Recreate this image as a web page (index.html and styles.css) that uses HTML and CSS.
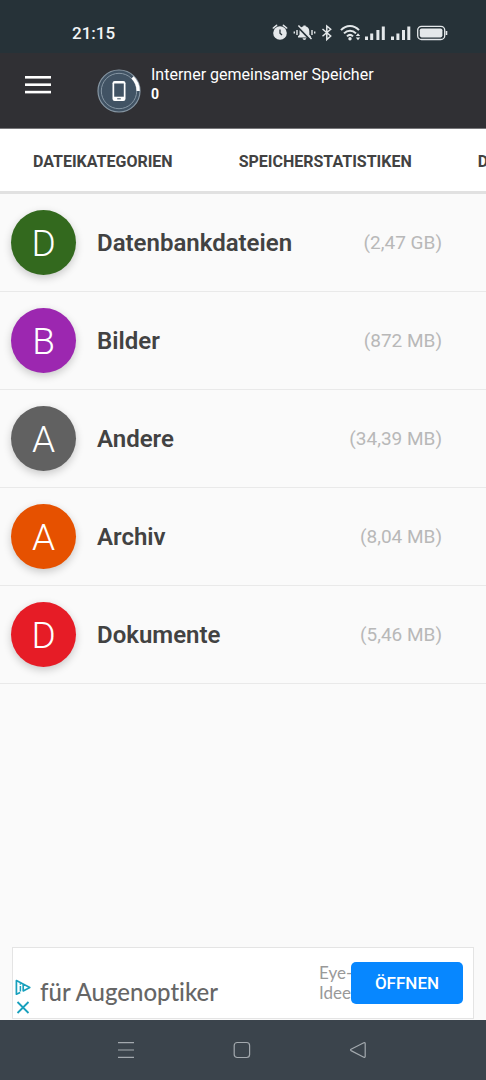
FILE: index.html
```html
<!DOCTYPE html>
<html lang="de">
<head>
    <meta charset="UTF-8">
    <meta name="viewport" content="width=device-width, initial-scale=1.0">
    <title>Dateikategorien</title>
    <link rel="stylesheet" href="styles.css">
</head>
<body>
    <div class="statusbar">
        <span class="clock">21:15</span>
        <svg class="status-icons" width="176" height="18" viewBox="0 0 176 18" fill="#e4e8ea" stroke="#e4e8ea">
            <!-- Wecker -->
            <circle cx="8" cy="9" r="6.8" stroke="none"/>
            <path d="M1.3 4 L4.6 1.3 M14.7 4 L11.4 1.3" fill="none" stroke-width="1.5" stroke-linecap="round"/>
            <path d="M8 5.5 V9.2 L10 11" fill="none" stroke="#263238" stroke-width="1.3"/>
            <!-- Stumm -->
            <path d="M26 13.5 V12.3 L27.5 10.8 V7.5 C27.5 4.8 29 2.9 31.4 2.3 V1.4 H33.6 V2.3 C36 2.9 37.3 4.8 37.3 7.5 V10.8 L38.8 12.3 V13.5 Z M30.6 14.3 H34.2 C34.2 16.4 30.6 16.4 30.6 14.3 Z" stroke="none"/>
            <path d="M26.2 2.8 L38.4 15.6" stroke="#263238" stroke-width="2.4"/>
            <path d="M26.4 1.5 L39.5 15" fill="none" stroke-width="1.5"/>
            <path d="M25 6 V11 M40 6 V11 M22.3 7.5 V9.5 M42.7 7.5 V9.5" fill="none" stroke-width="1.4"/>
            <!-- Bluetooth -->
            <path d="M50.5 5 L58.7 12 L54.8 15.6 V2 L58.7 5.3 L50.5 12.3" fill="none" stroke-width="1.5"/>
            <!-- WLAN -->
            <path d="M69 6.2 C74 .6 82 .6 87 6.2 M72 9.4 C75.5 5.7 80.5 5.7 84 9.4 M75 12.4 C77 10.4 79 10.4 81 12.4" fill="none" stroke-width="2"/>
            <circle cx="78" cy="14.7" r="1.7" stroke="none"/>
            <path d="M83.8 12 L86 9.3 L88.2 12 Z M83.8 13.5 L86 16.2 L88.2 13.5 Z" stroke="none"/>
            <!-- Empfang -->
            <path d="M94.5 16 V12.5 M99.7 16 V9.5 M105.9 16 V6 M111.3 16 V2.5" fill="none" stroke-width="3"/>
            <path d="M120.5 16 V12.5 M125.9 16 V9.5 M131.5 16 V6 M136.8 16 V2.5" fill="none" stroke-width="3"/>
            <!-- Akku -->
            <rect x="145.7" y="2.3" width="27" height="13.2" rx="3.8" fill="none" stroke-width="1.3"/>
            <rect x="147.8" y="4.4" width="22.6" height="9" rx="1.8" stroke="none"/>
            <path d="M174.5 7 V11" fill="none" stroke-width="1.6"/>
        </svg>
    </div>

    <header class="toolbar">
        <button type="button" class="menu-button" aria-label="Menü">
            <svg width="26" height="18" viewBox="0 0 26 18" fill="#fff">
                <rect y="0" width="26" height="2.6"/>
                <rect y="7.4" width="26" height="2.6"/>
                <rect y="14.8" width="26" height="2.6"/>
            </svg>
        </button>
        <svg class="storage-icon" width="44" height="44" viewBox="0 0 44 44" fill="none">
            <circle cx="22" cy="22" r="21" fill="#415364" stroke="#8696a3" stroke-width="1.2"/>
            <circle cx="22" cy="22" r="17.7" stroke="#8696a3" stroke-width="1"/>
            <path d="M35.5 8.4 A19.2 19.2 0 0 1 41.2 22" stroke="#fff" stroke-width="3.2"/>
            <rect x="15.5" y="12" width="13" height="20" rx="2.2" fill="#fff"/>
            <rect x="17.2" y="14.5" width="9.6" height="13.2" fill="#415364"/>
            <rect x="20.2" y="29.3" width="3.6" height="1" fill="#415364"/>
        </svg>
        <div class="storage">
            <span>Interner gemeinsamer Speicher</span>
            <b>0</b>
        </div>
    </header>

    <nav class="tabs">
        <a href="#kategorien">DATEIKATEGORIEN</a>
        <a href="#statistiken">SPEICHERSTATISTIKEN</a>
        <a href="#dateien">D</a>
    </nav>

    <main>
        <ul class="categories" id="kategorien">
            <li>
                <span class="letter green">D</span>
                <span class="name">Datenbankdateien</span>
                <span class="size">(2,47 GB)</span>
            </li>
            <li>
                <span class="letter purple">B</span>
                <span class="name">Bilder</span>
                <span class="size">(872 MB)</span>
            </li>
            <li>
                <span class="letter gray">A</span>
                <span class="name">Andere</span>
                <span class="size">(34,39 MB)</span>
            </li>
            <li>
                <span class="letter orange">A</span>
                <span class="name">Archiv</span>
                <span class="size">(8,04 MB)</span>
            </li>
            <li>
                <span class="letter red">D</span>
                <span class="name">Dokumente</span>
                <span class="size">(5,46 MB)</span>
            </li>
        </ul>
    </main>

    <aside class="ad">
        <svg class="ad-choices" width="16" height="36" viewBox="0 0 16 36" fill="none" stroke="#18a0bd">
            <path d="M5.2 13.4 L1.4 15.2 V1.6 L14.8 8.4 L8.2 11.9 V5.4" stroke-width="1.7" stroke-linejoin="round"/>
            <path d="M5.4 7 V12.4 M5.4 4.2 V5.8" stroke-width="1.5"/>
            <path d="M2.5 23 L13.5 34 M13.5 23 L2.5 34" stroke-width="1.8"/>
        </svg>
        <span class="ad-title">für Augenoptiker</span>
        <span class="ad-text">Eye-<br>Idee</span>
        <button type="button" class="ad-button">ÖFFNEN</button>
    </aside>

    <div class="navbar">
        <button type="button" aria-label="Letzte Apps">
            <svg width="18" height="18" viewBox="0 0 18 18" fill="none" stroke="#a3a9ae" stroke-width="1.2">
                <path d="M1 1.7 H17 M1 9 H17 M1 16.4 H17"/>
            </svg>
        </button>
        <button type="button" aria-label="Startbildschirm">
            <svg width="18" height="18" viewBox="0 0 18 18" fill="none" stroke="#a3a9ae" stroke-width="1.2">
                <rect x="1.2" y="1.5" width="15.4" height="15" rx="3"/>
            </svg>
        </button>
        <button type="button" aria-label="Zurück">
            <svg width="18" height="18" viewBox="0 0 18 18" fill="none" stroke="#a3a9ae" stroke-width="1.2" stroke-linejoin="round">
                <path d="M2 8.3 L14.8 1.8 Q16.2 1.4 16.2 2.8 V15.2 Q16.2 16.6 14.8 16.2 L2 9.6 Q1 9 2 8.3 Z"/>
            </svg>
        </button>
    </div>
</body>
</html>
```
FILE: styles.css
```css
* {
    box-sizing: border-box;
}

body {
    font-family: Roboto, "Liberation Sans", sans-serif;
    background-color: #fafafa;
    color: #424242;
    margin: 0;
    min-height: 100vh;
    display: flex;
    flex-direction: column;
    overflow-x: hidden;
}

button {
    background: none;
    border: none;
    padding: 0;
    font-family: inherit;
    cursor: pointer;
}

svg {
    display: block;
    flex: none;
}

.statusbar {
    display: flex;
    justify-content: space-between;
    align-items: center;
    height: 53px;
    padding: 12px 38px 0 72px;
    background-color: #263238;
}

.clock {
    color: #f2f5f6;
    font-size: 17px;
    font-weight: 500;
}

.toolbar {
    display: flex;
    height: 75px;
    padding: 0 24px;
    background-color: #303034;
    color: #fff;
}

.menu-button {
    height: 64px;
    padding: 0 1px;
}

.storage-icon {
    margin: 16px 10px 0 45px;
}

.storage {
    display: flex;
    flex-direction: column;
    padding-top: 12px;
    font-size: 16px;
    line-height: 20px;
}

.storage b {
    font-size: 14px;
    line-height: 18px;
}

.tabs {
    display: flex;
    height: 66px;
    background-color: #fff;
    border-top: 1px solid #77777a;
    border-bottom: 3px solid #e1e1e1;
    overflow: hidden;
}

.tabs a {
    flex: none;
    padding: 0 33px;
    line-height: 66px;
    color: #424242;
    font-size: 16px;
    font-weight: 700;
    text-decoration: none;
}

main {
    flex: 1;
}

.categories {
    list-style: none;
    margin: 0;
    padding: 0;
}

.categories li {
    display: flex;
    align-items: center;
    height: 98px;
    padding: 0 44px 0 11px;
    border-bottom: 1px solid #e9e9e9;
}

.letter {
    width: 65px;
    height: 65px;
    margin-right: 21px;
    border-radius: 50%;
    box-shadow: 0 3px 8px rgba(0, 0, 0, 0.2);
    color: #fff;
    font-size: 37px;
    font-weight: 300;
    line-height: 68px;
    text-align: center;
}

.green {
    background-color: #33691e;
}

.purple {
    background-color: #9c27b0;
}

.gray {
    background-color: #616161;
}

.orange {
    background-color: #e65100;
}

.red {
    background-color: #e61c26;
}

.name {
    flex: 1;
    font-size: 24px;
    font-weight: 600;
    line-height: 32px;
}

.size {
    color: #b8b8b8;
    font-size: 19px;
    line-height: 32px;
}

.ad {
    display: flex;
    align-items: center;
    height: 72px;
    margin: 0 12px 1px;
    padding: 0 10px 0 2px;
    background-color: #fff;
    border: 1px solid #e4e4e4;
    overflow: hidden;
}

.ad-choices {
    align-self: flex-end;
    margin-bottom: 3px;
}

.ad-title {
    flex: 1;
    padding: 16px 0 0 9px;
    color: #666;
    font-family: Lato, sans-serif;
    font-size: 24px;
    font-weight: 500;
    font-variant-ligatures: none;
    white-space: nowrap;
}

.ad-text {
    width: 32px;
    color: #999;
    font-family: Lato, sans-serif;
    font-size: 17px;
    line-height: 20px;
    white-space: nowrap;
}

.ad-button {
    z-index: 1;
    width: 112px;
    height: 42px;
    border-radius: 5px;
    background-color: #0787ff;
    color: #fff;
    font-size: 17px;
    font-weight: 500;
}

.navbar {
    display: flex;
    justify-content: center;
    gap: 98px;
    height: 60px;
    padding-right: 3px;
    background-color: #3b444c;
}
```
